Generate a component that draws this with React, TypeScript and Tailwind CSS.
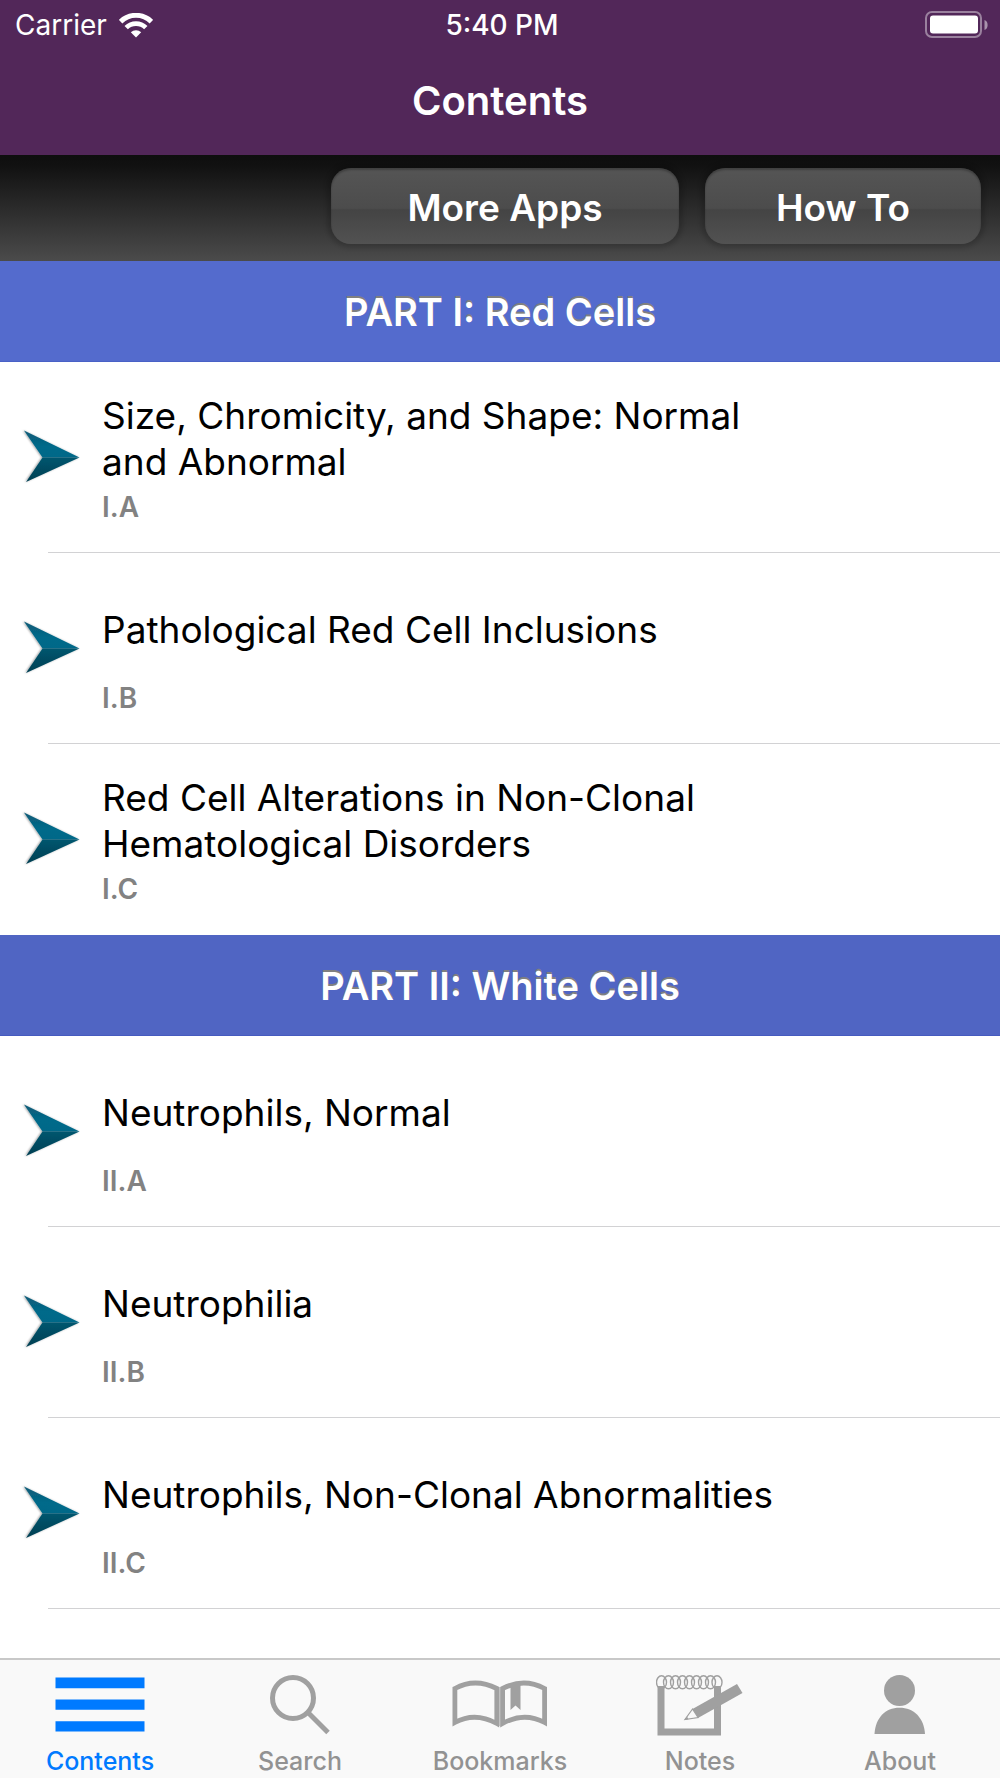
import type { ReactNode } from "react";

type Entry = { code: string; title: string };
type Part = { heading: string; tone: string; entries: Entry[] };

const parts: Part[] = [
  {
    heading: "PART I: Red Cells",
    tone: "bg-[#546bcd] border-[#4961c6]",
    entries: [
      { code: "I.A", title: "Size, Chromicity, and Shape: Normal and Abnormal" },
      { code: "I.B", title: "Pathological Red Cell Inclusions" },
      { code: "I.C", title: "Red Cell Alterations in Non-Clonal Hematological Disorders" },
    ],
  },
  {
    heading: "PART II: White Cells",
    tone: "bg-[#5065c3] border-[#465bbf]",
    entries: [
      { code: "II.A", title: "Neutrophils, Normal" },
      { code: "II.B", title: "Neutrophilia" },
      { code: "II.C", title: "Neutrophils, Non-Clonal Abnormalities" },
    ],
  },
];

function WifiIcon() {
  return (
    <svg width="34" height="25" viewBox="0 0 34 25" aria-hidden="true">
      <g fill="none" stroke="#fff">
        <path d="M1.600 8.600 A22 22 0 0 1 32.400 8.600" strokeWidth="5" />
        <path d="M7.200 14.600 A14 14 0 0 1 26.800 14.600" strokeWidth="4.800" />
      </g>
      <path d="M17 24.500 L11.800 19.300 A7.600 7.600 0 0 1 22.200 19.300 Z" fill="#fff" />
    </svg>
  );
}

function BatteryIcon() {
  return (
    <svg width="64" height="28" viewBox="0 0 64 28" role="img" aria-label="Battery full">
      <rect x="1" y="1" width="55" height="25" rx="6" fill="none" stroke="#fff" strokeOpacity=".42" strokeWidth="2" />
      <rect x="5" y="4.500" width="48" height="18" rx="3" fill="#fff" />
      <path d="M59.500 9 Q62.600 10.200 62.600 14 Q62.600 17.800 59.500 19 Z" fill="#fff" fillOpacity=".5" />
    </svg>
  );
}

function ArrowIcon() {
  return (
    <svg className="shrink-0" width="62" height="60" viewBox="0 0 62 60" aria-hidden="true">
      <defs>
        <linearGradient id="arrowTop" x1="0" y1="0" x2="0" y2="1">
          <stop offset="0" stopColor="#0a5a76" />
          <stop offset=".6" stopColor="#046a8a" />
          <stop offset="1" stopColor="#046888" />
        </linearGradient>
        <linearGradient id="arrowBottom" x1="0" y1="0" x2="0" y2="1">
          <stop offset="0" stopColor="#02566f" />
          <stop offset="1" stopColor="#063f52" />
        </linearGradient>
        <filter id="arrowShadow" x="-20%" y="-20%" width="140%" height="140%">
          <feDropShadow dx="-1" dy="0" stdDeviation="1.300" floodColor="#000" floodOpacity=".4" />
        </filter>
      </defs>
      <g filter="url(#arrowShadow)">
        <path d="M4 2.500 L59.500 29.500 L22.500 29.500 Z" fill="url(#arrowTop)" />
        <path d="M6 54 L59.500 29.500 L22.500 29.500 Z" fill="url(#arrowBottom)" />
      </g>
    </svg>
  );
}

function ContentsIcon() {
  return (
    <svg width="90" height="60" viewBox="0 0 90 60" fill="currentColor" aria-hidden="true">
      <path d="M.5 2.500h89v10.700H.5zM.5 24.500h89v10.200H.5zM.5 46.200h89v10.300H.5z" />
    </svg>
  );
}

function SearchIcon() {
  return (
    <svg width="60" height="60" viewBox="0 0 60 60" fill="none" stroke="currentColor" strokeWidth="5" aria-hidden="true">
      <circle cx="23" cy="23" r="20.500" />
      <path d="M38 37.500 L58 57.500" />
    </svg>
  );
}

function BookIcon() {
  return (
    <svg width="96" height="60" viewBox="0 0 96 60" aria-hidden="true">
      <g fill="none" stroke="currentColor" strokeWidth="4.800">
        <path d="M2.900 13.500 Q23 2.500 44.800 13.500 V48.500 Q23 36.500 2.900 47.500 Z" />
        <path d="M50.600 13.500 Q72 2.500 92.600 13.500 V47.500 Q72 36.500 50.600 48.500 Z" />
      </g>
      <path d="M47.700 12 V51" stroke="currentColor" strokeOpacity=".6" strokeWidth="1.200" />
      <path d="M58.500 9 L68.500 8 V35 L63.500 30.500 L58.500 35 Z" fill="currentColor" />
    </svg>
  );
}

function NotesIcon() {
  const rings = [5.5, 12.5, 19.5, 26.5, 33.5, 40.5, 47.5, 54.5, 61];
  return (
    <svg width="88" height="62" viewBox="0 0 88 62" aria-hidden="true">
      <path d="M1.500 11 H8.500 V53.500 H58 V11 H65 V60.500 H1.500 Z" fill="currentColor" />
      {rings.map((x) => (
        <ellipse key={x} cx={x} cy="7.300" rx="5" ry="6.500" fill="none" stroke="currentColor" strokeWidth="1.400" />
      ))}
      <path d="M36.500 34 L81 9 L86.500 18 L42 43 Z" fill="currentColor" />
      <path d="M36.500 34 L29 44.500 L42 42.500 Z" fill="#f9f9f9" stroke="currentColor" strokeWidth="1.200" />
      <path d="M28.500 45 L31 41.500 L32.500 44.300 Z" fill="currentColor" />
    </svg>
  );
}

function PersonIcon() {
  return (
    <svg width="52" height="60" viewBox="0 0 52 60" fill="currentColor" aria-hidden="true">
      <circle cx="25.500" cy="15.500" r="15.500" />
      <path d="M.5 59 C1.500 43 11 32.800 25.500 32.800 C40 32.800 50 43 51 59 Z" />
    </svg>
  );
}

const tabs: { label: string; icon: ReactNode }[] = [
  { label: "Contents", icon: <ContentsIcon /> },
  { label: "Search", icon: <SearchIcon /> },
  { label: "Bookmarks", icon: <BookIcon /> },
  { label: "Notes", icon: <NotesIcon /> },
  { label: "About", icon: <PersonIcon /> },
];

const toolbarButton =
  "flex h-[76px] items-center justify-center rounded-[20px] bg-[linear-gradient(#555_0%,#4c4c4c_53%,#444_55%,#525252_100%)] pt-1 text-[37px] leading-[46px] font-semibold text-white shadow-[0_0_4px_4px_rgba(0,0,0,0.16),inset_0_2px_2px_rgba(0,0,0,0.25)]";

function EntryRow({ entry, last }: { entry: Entry; last: boolean }) {
  return (
    <li className="relative">
      <a href={"#" + entry.code} className="flex h-[191px] items-center pl-5">
        <ArrowIcon />
        <span className="flex flex-col gap-[5px] pt-0.5 pl-5">
          <span className="flex h-[92px] w-[680px] items-center text-[37px] leading-[46px] text-black">
            {entry.title}
          </span>
          <span className="text-[28px] leading-[34px] font-semibold text-[#828282]">{entry.code}</span>
        </span>
      </a>
      {!last && <span className="absolute right-0 bottom-0 left-12 h-px bg-[#d2d2d4]" />}
    </li>
  );
}

export default function App() {
  return (
    <div className="flex h-screen flex-col bg-white font-['Inter',sans-serif]">
      <header className="shrink-0 bg-[#522759] text-white">
        <div className="grid h-[50px] grid-cols-[1fr_auto_1fr] items-center pr-[11px] pl-[15px] text-[28px] leading-[34px]">
          <span className="flex items-center gap-3">
            Carrier
            <WifiIcon />
          </span>
          <span className="text-center font-medium">5:40 PM</span>
          <span className="flex justify-end">
            <BatteryIcon />
          </span>
        </div>
        <h1 className="h-[105px] pt-[27px] text-center text-[40px] leading-[48px] font-semibold">Contents</h1>
      </header>

      <div className="flex h-[106px] shrink-0 items-center justify-end gap-[26px] bg-[linear-gradient(#0e0e0e_0%,#111_10%,#4b4b4b_100%)] pr-[19px] pb-1">
        <button type="button" className={toolbarButton + " w-[348px]"}>
          More Apps
        </button>
        <button type="button" className={toolbarButton + " w-[276px]"}>
          How To
        </button>
      </div>

      <main className="min-h-0 flex-1 overflow-y-auto">
        {parts.map((part) => (
          <section key={part.heading}>
            <h2
              className={
                "flex h-[101px] items-center justify-center border-b pt-0.5 text-[38px] leading-[46px] font-semibold text-white [text-shadow:0_-2px_0_#808080] " +
                part.tone
              }
            >
              {part.heading}
            </h2>
            <ul>
              {part.entries.map((entry, i) => (
                <EntryRow
                  key={entry.code}
                  entry={entry}
                  last={i === part.entries.length - 1 && part !== parts[parts.length - 1]}
                />
              ))}
            </ul>
          </section>
        ))}
      </main>

      <nav className="grid h-[120px] shrink-0 grid-cols-5 border-t-2 border-[#c8c8c8] bg-[#f9f9f9]">
        {tabs.map((tab, i) => (
          <a
            key={tab.label}
            href={"#" + tab.label}
            aria-current={i === 0 ? "page" : undefined}
            className={
              "flex flex-col items-center pt-[15px] " + (i === 0 ? "text-[#007aff]" : "text-[#a0a0a0]")
            }
          >
            <span className="flex h-[62px] items-start">{tab.icon}</span>
            <span
              className={"mt-[9px] text-[25px] leading-[30px] font-medium " + (i === 0 ? "" : "text-[#929292]")}
            >
              {tab.label}
            </span>
          </a>
        ))}
      </nav>
    </div>
  );
}
